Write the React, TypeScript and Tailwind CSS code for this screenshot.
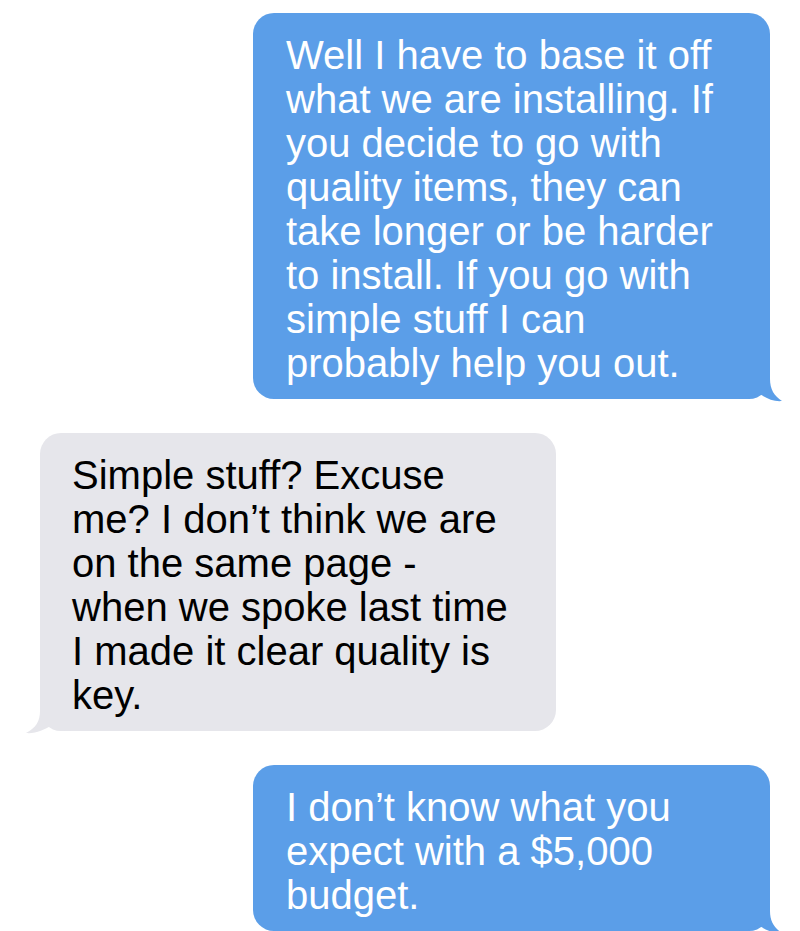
import React from "react";

const BLUE = "#5b9ee8";
const GRAY = "#e6e6eb";

function TailRight({ color }: { color: string }) {
  return (
    <svg
      className="absolute"
      style={{ right: -13, bottom: -3 }}
      width="44"
      height="33"
      viewBox="0 0 44 33"
    >
      <path
        d="M0 0 H31 V10 C31 20 35 27 43 32 C35 33 27 29 19 24 C14 27 8 30 0 30 Z"
        fill={color}
      />
    </svg>
  );
}

function TailLeft({ color }: { color: string }) {
  return (
    <svg
      className="absolute"
      style={{ left: -15, bottom: -3 }}
      width="46"
      height="33"
      viewBox="0 0 46 33"
    >
      <path
        d="M46 0 H15 V10 C15 20 11 27 1 32 C10 33 19 29 27 24 C32 27 38 30 46 30 Z"
        fill={color}
      />
    </svg>
  );
}

function Bubble({
  side,
  lines,
}: {
  side: "left" | "right";
  lines: string[];
}) {
  const isRight = side === "right";
  return (
    <div
      className={
        isRight
          ? "relative self-end mr-[30px] w-[517px] rounded-[21px] bg-[#5b9ee8] pl-[33px] pr-4 pt-[20px] pb-[14px] text-white"
          : "relative self-start ml-[40px] w-[516px] rounded-[21px] bg-[#e6e6eb] pl-[32px] pr-4 pt-[20px] pb-[14px] text-black"
      }
    >
      <p className="relative z-10 text-[40px] leading-[44px] font-['Liberation_Sans',Arial,sans-serif]">
        {lines.map((l, i) => (
          <React.Fragment key={i}>
            {l}
            {i < lines.length - 1 && <br />}
          </React.Fragment>
        ))}
      </p>
      {isRight ? <TailRight color={BLUE} /> : <TailLeft color={GRAY} />}
    </div>
  );
}

export default function App() {
  return (
    <div className="w-[800px] h-[931px] overflow-hidden bg-white flex flex-col pt-[13px] gap-[34px]">
      <Bubble
        side="right"
        lines={[
          "Well I have to base it off",
          "what we are installing. If",
          "you decide to go with",
          "quality items, they can",
          "take longer or be harder",
          "to install. If you go with",
          "simple stuff I can",
          "probably help you out.",
        ]}
      />
      <Bubble
        side="left"
        lines={[
          "Simple stuff? Excuse",
          "me? I don\u2019t think we are",
          "on the same page -",
          "when we spoke last time",
          "I made it clear quality is",
          "key.",
        ]}
      />
      <Bubble
        side="right"
        lines={[
          "I don\u2019t know what you",
          "expect with a $5,000",
          "budget.",
        ]}
      />
    </div>
  );
}
